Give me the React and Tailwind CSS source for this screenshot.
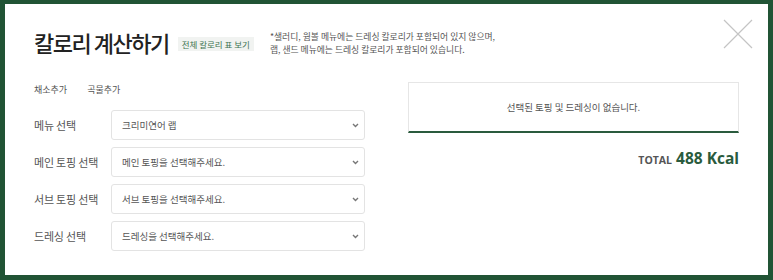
import React from "react";

const rows = [
  { label: "메뉴 선택", value: "크리미연어 랩" },
  { label: "메인 토핑 선택", value: "메인 토핑을 선택해주세요." },
  { label: "서브 토핑 선택", value: "서브 토핑을 선택해주세요." },
  { label: "드레싱 선택", value: "드레싱을 선택해주세요." },
];

function Chevron() {
  return (
    <svg width="7" height="5" viewBox="0 0 7 5" className="shrink-0">
      <path d="M1 1 L3.5 3.5 L6 1" fill="none" stroke="#777" strokeWidth="1.4" />
    </svg>
  );
}

export default function App() {
  return (
    <div
      className="w-[773px] h-[280px] bg-[#215435] pt-[4px] pb-[5px] px-[5px]"
      style={{ fontFamily: '"Noto Sans CJK KR", "Noto Sans", sans-serif' }}
    >
      <div className="h-full bg-white relative px-[29px]">
        {/* header */}
        <div className="flex items-center pt-[23px]">
          <h1 className="text-[22px] leading-[30px] font-medium text-[#222] tracking-[-1.5px]">
            칼로리 계산하기
          </h1>
          <span className="ml-[9px] mt-[4px] bg-[#f1f3f1] text-[#3f7451] text-[8.5px] leading-[14px] px-[4px]">
            전체 칼로리 표 보기
          </span>
          <p className="ml-[16px] mt-[2px] text-[8.8px] leading-[13px] text-[#555]">
            *샐러디, 웜볼 메뉴에는 드레싱 칼로리가 포함되어 있지 않으며,
            <br />
            랩, 샌드 메뉴에는 드레싱 칼로리가 포함되어 있습니다.
          </p>
        </div>

        <button className="absolute right-[15px] top-[15px] w-[30px] h-[30px]">
          <svg width="30" height="30" viewBox="0 0 30 30">
            <path d="M1 1 L29 29 M29 1 L1 29" stroke="#c4c4c4" strokeWidth="1.2" fill="none" />
          </svg>
        </button>

        <div className="flex justify-between mt-[25px]">
          {/* left */}
          <div className="w-[331px]">
            <div className="flex gap-[20px] text-[9px] leading-[14px] text-[#555] mb-[13px] mt-[1px]">
              <span>채소추가</span>
              <span>곡물추가</span>
            </div>
            <div className="flex flex-col gap-[7px]">
              {rows.map((r) => (
                <div key={r.label} className="flex items-center">
                  <div className="w-[77px] text-[11px] tracking-[-0.2px] text-[#555]">{r.label}</div>
                  <div className="flex-1 h-[30px] border border-[#e3e3e3] rounded-[3px] flex items-center justify-between pl-[10px] pr-[5px] text-[9.5px] text-[#555]">
                    <span>{r.value}</span>
                    <Chevron />
                  </div>
                </div>
              ))}
            </div>
          </div>

          {/* right */}
          <div className="w-[331px]">
            <div className="h-[51px] border border-[#e6e6e6] border-b-2 border-b-[#2a5b3d] flex items-center justify-center text-[9.5px] text-[#555]">
              선택된 토핑 및 드레싱이 없습니다.
            </div>
            <div
              className="flex items-baseline justify-end mt-[14px] gap-[4px]"
              style={{ fontFamily: '"Open Sans", "Noto Sans", sans-serif' }}
            >
              <span className="text-[10.5px] font-bold text-[#555]">TOTAL</span>
              <span className="text-[15.5px] font-bold text-[#2a5b3d]">488 Kcal</span>
            </div>
          </div>
        </div>
      </div>
    </div>
  );
}
